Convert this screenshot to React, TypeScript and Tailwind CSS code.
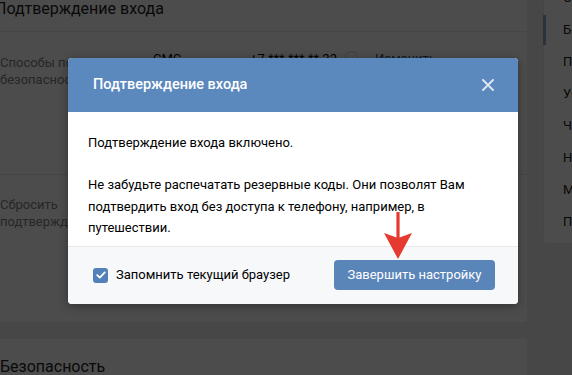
export default function App() {
  const menu = [
    "Общее",
    "Безопасность",
    "Приватность",
    "Уведомления",
    "Чёрный список",
    "Настройки приложений",
    "Мобильные сервисы",
    "Платежи и переводы",
  ];

  return (
    <div className="relative h-[375px] w-[572px] overflow-hidden bg-[#edeef0] font-['Roboto',sans-serif] text-[13px] text-black">
      {/* page behind the dialog */}
      <div className="ml-[-26px] mt-[-14px] flex gap-[16px]">
        <div className="flex w-[553px] shrink-0 flex-col gap-[17px]">
          <div className="rounded-[4px] bg-white">
            <div className="flex h-[46px] items-center border-b border-[#e7e8ec] pl-[21px] text-[16px] text-[#222]">
              Подтверждение входа
            </div>
            <div className="flex h-[143px] border-b border-[#e7e8ec] pl-[26px] pt-[22px] leading-[17px]">
              <div className="w-[153px] whitespace-nowrap text-[#828282]">
                Способы подтверждения
                <br />
                безопасности
              </div>
              <div className="mt-[-4px] flex items-start whitespace-nowrap">
                <span className="w-[97px]">СМС</span>
                <span className="w-[95px]">+7 *** *** ** 22</span>
                <span className="mr-[17px] mt-[1px] h-[13px] w-[13px] rounded-full border border-[#c5d0db]" />
                <span className="text-[#2a5885]">Изменить</span>
              </div>
            </div>
            <div className="h-[147px] pl-[26px] pt-[21px] leading-[17px] text-[#828282]">
              Сбросить
              <br />
              подтверждение
            </div>
          </div>
          <div className="h-[60px] rounded-[4px] bg-white pl-[26px] pt-[16px] text-[16px] text-[#222]">
            Безопасность
          </div>
        </div>

        <div className="h-[257px] w-[220px] shrink-0 rounded-[4px] border-l border-[#e7e8ec] bg-white">
          <div className="-mt-[4px]">
            {menu.map((m, i) => (
              <div key={m} className="relative flex h-[32px] items-center whitespace-nowrap pl-[19px] text-[#222]">
                {i === 1 && <span className="absolute left-[-1px] top-[1px] h-[30px] w-[3px] bg-[#8fadc8]" />}
                {m}
              </div>
            ))}
          </div>
        </div>
      </div>

      {/* overlay */}
      <div className="absolute inset-0 bg-black/70" />

      {/* dialog */}
      <div className="absolute left-[68px] top-[58px] w-[450px] overflow-hidden rounded-[4px] bg-white shadow-[0_2px_10px_rgba(0,0,0,0.35)]">
        <div className="flex h-[54px] items-center justify-between bg-[#5b88bd] pl-[25px] pr-[25px]">
          <span className="text-[14.5px] font-medium text-white">Подтверждение входа</span>
          <svg width="12" height="12" viewBox="0 0 12 12" className="mr-[-1px]">
            <path d="M1 1L11 11M11 1L1 11" stroke="#dbe5f0" strokeWidth="2" strokeLinecap="round" />
          </svg>
        </div>
        <div className="px-[20px] pb-[7px] pt-[20px] leading-[21.5px]">
          <p>Подтверждение входа включено.</p>
          <p className="mt-[20.5px]">
            Не забудьте распечатать резервные коды. Они позволят Вам подтвердить вход без доступа к телефону, например, в
            путешествии.
          </p>
        </div>
        <div className="flex h-[58px] items-center justify-between border-t border-[#e7e8ec] bg-[#f7f8fa] pl-[25px] pr-[23px]">
          <label className="flex items-center gap-[8px]">
            <span className="flex h-[15px] w-[15px] items-center justify-center rounded-[3px] bg-[#5181b8]">
              <svg width="10" height="8" viewBox="0 0 10 8">
                <path d="M1.2 4.2L3.8 6.6L8.8 1.4" fill="none" stroke="white" strokeWidth="1.8" strokeLinecap="round" strokeLinejoin="round" />
              </svg>
            </span>
            <span>Запомнить текущий браузер</span>
          </label>
          <button className="h-[30px] w-[161px] rounded-[4px] bg-[#5a85b9] text-[13px] text-white">
            Завершить настройку
          </button>
        </div>
      </div>

      {/* red arrow */}
      <svg className="absolute left-[383px] top-[212px]" width="30" height="48" viewBox="0 0 30 48">
        <path d="M15 1V30" stroke="#e53a30" strokeWidth="3.2" strokeLinecap="round" />
        <path d="M1 21L15 26L29 21L15 47Z" fill="#e53a30" />
      </svg>
    </div>
  );
}
